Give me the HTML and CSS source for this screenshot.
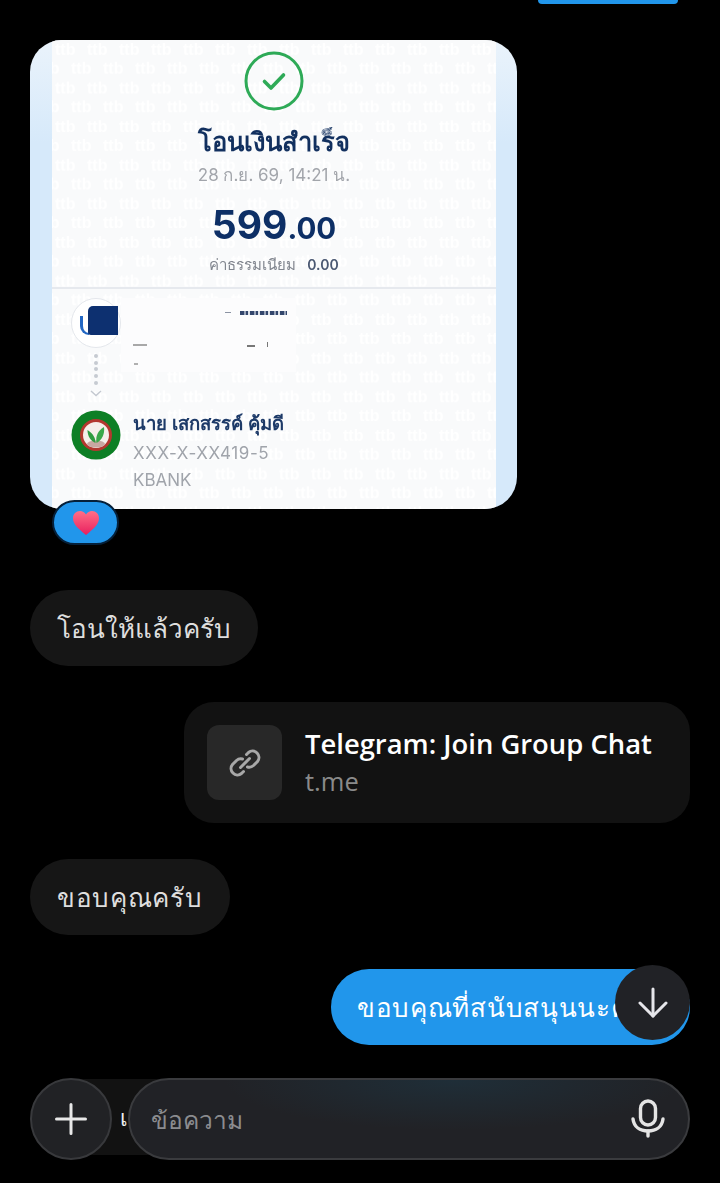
FILE: index.html
```html
<!DOCTYPE html>
<html lang="th">
<head>
    <meta charset="UTF-8">
    <title>แชท</title>
    <link rel="stylesheet" href="styles.css">
</head>
<body>
<div class="screen">
    <div class="chat">
        <div class="top-bubble"></div>

        <!-- slip image -->
        <div class="slip-wrap">
            <div class="slip">
                <div class="paper">
                    <svg class="watermark" width="444" height="470">
                        <defs>
                            <pattern id="wm" width="32" height="38.600" patternUnits="userSpaceOnUse">
                                <text x="3" y="15" class="wm-text">ttb</text>
                                <text x="19" y="34" class="wm-text">ttb</text>
                                <text x="-13" y="34" class="wm-text">ttb</text>
                            </pattern>
                        </defs>
                        <rect width="444" height="470" fill="url(#wm)"></rect>
                    </svg>
                    <div class="slip-head">
                        <svg class="check" width="60" height="60" viewBox="0 0 60 60">
                            <circle cx="30" cy="30" r="28" fill="none" stroke="#2eaa57" stroke-width="3"></circle>
                            <path d="M20.500 30.500L27 37l12.500-13" fill="none" stroke="#2eaa57" stroke-width="3.600" stroke-linecap="round" stroke-linejoin="round"></path>
                        </svg>
                        <div class="slip-title">โอนเงินสำเร็จ</div>
                        <div class="slip-date">28 ก.ย. 69, 14:21 น.</div>
                        <div class="slip-amount">599<span class="cents">.00</span></div>
                        <div class="slip-fee">ค่าธรรมเนียม <b>0.00</b></div>
                    </div>
                    <div class="slip-body">
                        <div class="sender">
                            <div class="sender-logo"><span class="logo-arc"></span><span class="logo-block"></span></div>
                            <!-- ชื่อผู้โอนถูกลบออกจากรูป เหลือแค่รอยเล็กน้อย -->
                            <div class="redacted">
                                <span class="smudge smudge-a"></span>
                                <span class="smudge smudge-b"></span>
                                <span class="smudge smudge-c"></span>
                                <span class="smudge smudge-d"></span>
                                <span class="smudge smudge-e"></span>
                                <span class="smudge smudge-f"></span>
                            </div>
                        </div>
                        <div class="dots">
                            <i></i><i></i><i></i><i></i><i></i>
                            <svg width="12" height="7" viewBox="0 0 12 7"><path d="M1 1l5 4.500L11 1" fill="none" stroke="#c3c8d0" stroke-width="1.400"></path></svg>
                        </div>
                        <div class="receiver">
                            <svg class="kbank" width="50" height="50" viewBox="0 0 50 50">
                                <circle cx="25" cy="25" r="24.500" fill="#0d7f25"></circle>
                                <circle cx="25" cy="25" r="14.500" fill="#f5efea" stroke="#b3382f" stroke-width="3"></circle>
                                <ellipse cx="25" cy="34" rx="9" ry="3.500" fill="#c9a8a2"></ellipse>
                                <path d="M24.500 33c0-5-2-9-8-13 0 6 3 11 8 13z" fill="#2f9c40"></path>
                                <path d="M25.500 33c-1-7 1-12 7.500-16 1 7-2 13-7.500 16z" fill="#3aa84a"></path>
                            </svg>
                            <div class="receiver-text">
                                <div class="receiver-name">นาย เสกสรรค์ คุ้มดี</div>
                                <div class="receiver-line">XXX-X-XX419-5</div>
                                <div class="receiver-bank">KBANK</div>
                            </div>
                        </div>
                    </div>
                </div>
            </div>
            <div class="reaction">
                <svg width="28" height="26" viewBox="0 0 28 26">
                    <defs>
                        <linearGradient id="heart" x1="0" y1="0" x2="0" y2="1">
                            <stop offset="0" stop-color="#ff6f86"></stop>
                            <stop offset="1" stop-color="#e81f5f"></stop>
                        </linearGradient>
                    </defs>
                    <path d="M14 25C5 18 1 13.500 1 8.300 1 4 4.200 1 8 1c2.500 0 4.700 1.300 6 3.500C15.300 2.300 17.500 1 20 1c3.800 0 7 3 7 7.300C27 13.500 23 18 14 25z" fill="url(#heart)"></path>
                </svg>
            </div>
        </div>

        <div class="bubble bubble-in first-in">โอนให้แล้วครับ</div>

        <div class="link-card">
            <div class="link-icon">
                <svg width="36" height="36" viewBox="0 0 36 36" fill="none" stroke="#a8a8a8" stroke-width="3" stroke-linecap="round">
                    <path d="M19.500 9.500l2-2a6.400 6.400 0 0 1 9 9l-4 4a6.400 6.400 0 0 1-6 1.500"></path>
                    <path d="M16.500 26.500l-2 2a6.400 6.400 0 0 1-9-9l4-4a6.400 6.400 0 0 1 6-1.500"></path>
                    <path d="M13.500 22.500l9-9"></path>
                </svg>
            </div>
            <div class="link-text">
                <div class="link-title">Telegram: Join Group Chat</div>
                <div class="link-host">t.me</div>
            </div>
        </div>

        <div class="bubble bubble-in wide">ขอบคุณครับ</div>
        <div class="bubble bubble-out wide">ขอบคุณที่สนับสนุนนะครับ</div>
    </div>

    <button class="scroll-down">
        <svg width="34" height="34" viewBox="0 0 34 34" fill="none" stroke="#e6e6ea" stroke-width="3" stroke-linecap="round" stroke-linejoin="round">
            <path d="M17 3v27"></path>
            <path d="M4 17l13 13 13-13"></path>
        </svg>
    </button>

    <!-- bottom bar -->
    <div class="composer">
        <div class="behind-strip">เ</div>
        <button class="plus">
            <svg width="32" height="32" viewBox="0 0 32 32" stroke="#e8e8e8" stroke-width="3" stroke-linecap="round">
                <path d="M16 1.500v29M1.500 16h29"></path>
            </svg>
        </button>
        <div class="input">
            <span class="placeholder">ข้อความ</span>
            <svg width="34" height="40" viewBox="0 0 34 40" fill="none" stroke="#e4e4e4" stroke-width="3.400" stroke-linecap="round">
                <rect x="9.500" y="2" width="15" height="24" rx="7.500"></rect>
                <path d="M2 20c1 8 7 12 15 12s14-4 15-12"></path>
                <path d="M17 32v5"></path>
            </svg>
        </div>
    </div>
</div>
</body>
</html>
```

FILE: styles.css
```css
* {
    margin: 0;
    padding: 0;
    border: 0;
    box-sizing: border-box;
}

html, body {
    background: #000;
}

body {
    font-family: "Noto Sans", "Noto Sans CJK SC", "DejaVu Sans", sans-serif;
}

.screen {
    position: relative;
    width: 720px;
    height: 1183px;
    overflow: hidden;
    background: #000;
}

.chat {
    display: flex;
    flex-direction: column;
    padding: 0 30px;
}

.top-bubble {
    align-self: flex-end;
    width: 140px;
    height: 4px;
    margin-right: 12px;
    background: #2196eb;
    border-radius: 0 0 20px 20px;
}

.slip-wrap {
    position: relative;
    width: 487px;
    height: 469px;
    margin-top: 36px;
}

.slip {
    width: 487px;
    height: 469px;
    border-radius: 32px;
    overflow: hidden;
    background: linear-gradient(#eaf3fb, #d6e9fa 22%);
    padding: 0 22px;
}

.paper {
    position: relative;
    width: 444px;
    height: 469px;
    background: #f9fafb;
    color: #0d2f66;
    filter: blur(0.4px);
}

.watermark {
    position: absolute;
    left: 0;
    top: 0;
}

.wm-text {
    font-family: "Liberation Sans", sans-serif;
    font-size: 16px;
    font-weight: bold;
    fill: #fff;
}

.slip-head {
    position: relative;
    display: flex;
    flex-direction: column;
    align-items: center;
    height: 249px;
    padding-top: 11px;
    border-bottom: 2px solid #e6e9ee;
}

.slip-title {
    font-size: 25.500px;
    font-weight: 700;
    line-height: 34px;
    margin-top: 13px;
    color: #12305f;
}

.slip-date {
    font-family: "Inter", "Noto Sans", sans-serif;
    font-size: 17px;
    line-height: 24px;
    margin-top: 5px;
    color: #a2a5ab;
}

.slip-amount {
    font-family: "Inter", sans-serif;
    font-size: 39px;
    font-weight: 700;
    line-height: 46px;
    margin-top: 15px;
    color: #0d2f66;
}

.cents {
    font-size: 29.500px;
}

.slip-fee {
    font-size: 15px;
    line-height: 20px;
    margin-top: 3px;
    color: #80858e;
}

.slip-fee b {
    margin-left: 7px;
    font-family: "Inter", sans-serif;
    font-size: 14px;
    font-weight: 600;
    color: #4a5872;
}

.slip-body {
    position: relative;
    padding: 9px 0 0 19px;
}

.sender {
    display: flex;
    height: 50px;
}

.sender-logo {
    position: relative;
    width: 50px;
    height: 50px;
    border-radius: 50%;
    background: #fff;
    border: 1px solid #e4e7ec;
}

.logo-arc {
    position: absolute;
    left: 8px;
    top: 17px;
    width: 9px;
    height: 19px;
    border-left: 3px solid #2267c4;
    border-bottom: 2px solid #2267c4;
    border-radius: 0 0 0 9px;
}

.logo-block {
    position: absolute;
    left: 16px;
    top: 7px;
    width: 30px;
    height: 29px;
    background: #0d3070;
    border-radius: 5px 0 0 3px;
}

.redacted {
    position: relative;
    width: 175px;
    height: 74px;
    background: #fcfcfd;
}

.smudge {
    position: absolute;
    display: block;
    height: 2px;
    background: #8b93a3;
}

.smudge-a {
    left: 104px;
    top: 14px;
    width: 6px;
    height: 1px;
}

.smudge-b {
    left: 119px;
    top: 13px;
    width: 47px;
    height: 4px;
    background: repeating-linear-gradient(90deg, #33466c 0 4px, #9aa5ba 4px 6px, #33466c 6px 8px, #dfe3ea 8px 10px);
}

.smudge-c {
    left: 12px;
    top: 46px;
    width: 14px;
    background: #a8a8a8;
}

.smudge-d {
    left: 126px;
    top: 47px;
    width: 8px;
    background: #777;
}

.smudge-e {
    left: 146px;
    top: 44px;
    width: 1px;
    height: 5px;
    background: #777;
}

.smudge-f {
    left: 13px;
    top: 65px;
    width: 4px;
    background: #b0b0b0;
}

.dots {
    display: flex;
    flex-direction: column;
    align-items: center;
    gap: 2.700px;
    width: 50px;
    padding-top: 6px;
    margin-top: 0;
}

.dots i {
    display: block;
    width: 4px;
    height: 4px;
    border-radius: 50%;
    background: #c6cad1;
}

.dots svg {
    margin-top: 3px;
}

.receiver {
    display: flex;
    gap: 12px;
    margin-top: 13px;
}

.kbank {
    flex: none;
}

.receiver-name {
    font-size: 18.500px;
    font-weight: 700;
    line-height: 24px;
    margin-top: 1px;
    color: #1d3a68;
}

.receiver-line {
    font-family: "Inter", sans-serif;
    font-size: 17px;
    letter-spacing: 0.600px;
    line-height: 19px;
    margin-top: 9px;
    color: #a0a4ab;
}

.receiver-bank {
    font-family: "Inter", sans-serif;
    font-size: 17px;
    line-height: 19px;
    margin-top: 8px;
    color: #a0a4ab;
}

.reaction {
    position: absolute;
    left: 22px;
    top: 460px;
    display: flex;
    align-items: center;
    justify-content: center;
    width: 67px;
    height: 45px;
    border-radius: 23px;
    background: #2196eb;
    border: 2px solid #05203a;
}

.bubble {
    display: flex;
    align-items: center;
    height: 76px;
    padding: 0 27px;
    border-radius: 38px;
    font-size: 26px;
    white-space: nowrap;
    color: #dedede;
}

.wide {
    letter-spacing: 0.700px;
}

.bubble-in {
    align-self: flex-start;
    background: #161616;
    margin-top: 36px;
}

.first-in {
    margin-top: 81px;
}

.bubble-out {
    align-self: flex-end;
    width: 359px;
    margin-top: 34px;
    padding-left: 26px;
    background: #2196eb;
    color: #fff;
    overflow: hidden;
}

.link-card {
    display: flex;
    align-items: center;
    gap: 23px;
    align-self: flex-end;
    width: 506px;
    height: 121px;
    margin-top: 36px;
    padding-left: 23px;
    background: #121212;
    border-radius: 30px;
}

.link-icon {
    display: flex;
    align-items: center;
    justify-content: center;
    width: 75px;
    height: 75px;
    border-radius: 12px;
    background: #282828;
}

.link-title {
    font-family: "Open Sans", sans-serif;
    font-size: 27.400px;
    font-weight: 600;
    line-height: 36px;
    margin-top: -2px;
    white-space: nowrap;
    color: #fff;
}

.link-host {
    font-family: "Open Sans", sans-serif;
    font-size: 25.500px;
    line-height: 34px;
    margin-top: 2px;
    color: #8a8a8a;
}

.scroll-down {
    position: absolute;
    left: 615px;
    top: 965px;
    display: flex;
    align-items: center;
    justify-content: center;
    width: 75px;
    height: 75px;
    border-radius: 50%;
    background: #212226;
}

.composer {
    position: absolute;
    left: 30px;
    top: 1078px;
    display: flex;
    gap: 16px;
    width: 660px;
    height: 82px;
}

.behind-strip {
    position: absolute;
    left: 30px;
    top: 1px;
    width: 100px;
    height: 76px;
    padding-left: 60px;
    background: #121212;
    font-size: 22px;
    line-height: 76px;
    color: #eee;
}

.plus {
    position: relative;
    display: flex;
    align-items: center;
    justify-content: center;
    flex: none;
    width: 82px;
    height: 82px;
    border-radius: 50%;
    background: #212225;
    border: 2px solid #38393c;
}

.input {
    position: relative;
    display: flex;
    align-items: center;
    justify-content: space-between;
    flex: 1;
    padding: 0 23px 0 21px;
    border-radius: 41px;
    border: 2px solid #3a3b3e;
    background: radial-gradient(ellipse 230px 50px at 58% 0, #1f2e38 0%, #212226 100%) #212226;
}

.placeholder {
    font-size: 24.500px;
    padding-top: 3px;
    color: #8b8c8f;
}
```
